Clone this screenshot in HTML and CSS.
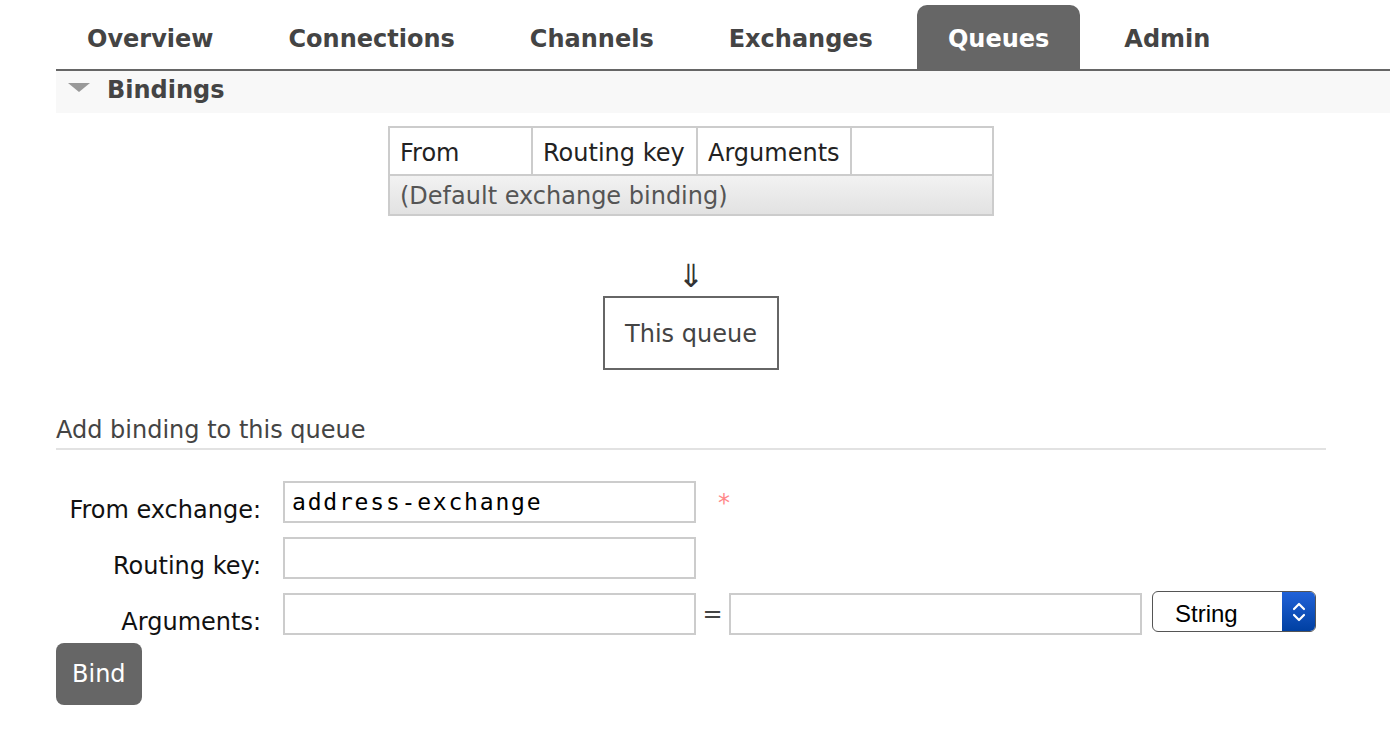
FILE: index.html
```html
<!DOCTYPE html>
<html lang="en">
<head>
<meta charset="utf-8">
<title>Queues - Bindings</title>
<link rel="stylesheet" href="styles.css">
</head>
<body>
<div class="page">
  <ul class="tabs">
    <li><a href="#">Overview</a></li>
    <li><a href="#">Connections</a></li>
    <li><a href="#">Channels</a></li>
    <li><a href="#">Exchanges</a></li>
    <li><a href="#" class="active">Queues</a></li>
    <li><a href="#">Admin</a></li>
  </ul>
  <div class="section-h"><span class="tri"></span><span>Bindings</span></div>
  <div class="content">
    <table class="bindings">
      <colgroup><col class="c1"><col class="c2"><col class="c3"><col class="c4"></colgroup>
      <thead>
        <tr><th>From</th><th>Routing key</th><th>Arguments</th><th></th></tr>
      </thead>
      <tbody>
        <tr><td colspan="4">(Default exchange binding)</td></tr>
      </tbody>
    </table>
    <div class="arrow">&#8659;</div>
    <div class="queue-box">This queue</div>

    <h3 class="add-h">Add binding to this queue</h3>

    <form class="bind-form" onsubmit="return false">
      <div class="form-row">
        <label class="lbl">From exchange:</label>
        <input class="inp" type="text" value="address-exchange">
        <span class="req">*</span>
      </div>
      <div class="form-row">
        <label class="lbl">Routing key:</label>
        <input class="inp" type="text" value="">
      </div>
      <div class="form-row last">
        <label class="lbl">Arguments:</label>
        <input class="inp" type="text" value="">
        <span class="eq">=</span>
        <input class="inp" type="text" value="">
        <div class="select">
          <span class="select-text">String</span>
          <span class="select-btn">
            <svg width="16" height="26" viewBox="0 0 16 26"><path d="M3 10 L8 5 L13 10 M3 16 L8 21 L13 16" fill="none" stroke="#fff" stroke-width="2.2" stroke-linecap="round" stroke-linejoin="round"/></svg>
          </span>
        </div>
      </div>
      <button class="btn" type="submit">Bind</button>
    </form>
  </div>
</div>
</body>
</html>
```
FILE: styles.css
```css
html, body {
  margin: 0;
  padding: 0;
  background: #fff;
}
body {
  font-family: "DejaVu Sans", Verdana, sans-serif;
  font-size: 24px;
  color: #444;
}
.page {
  padding-left: 56px;
}
.tabs {
  display: flex;
  gap: 13px;
  list-style: none;
  margin: 5px 0 0;
  padding: 0;
  border-bottom: 2px solid #666;
}
.tabs a {
  display: block;
  padding: 20px 31px 16px;
  line-height: 28px;
  font-weight: bold;
  color: #444;
  text-decoration: none;
}
.tabs a.active {
  background: #666;
  color: #fff;
  border-radius: 10px 10px 0 0;
}
.section-h {
  display: flex;
  align-items: flex-start;
  background: #f8f8f8;
  padding: 5px 0 9px 12px;
  line-height: 28px;
  font-weight: bold;
  color: #444;
}
.tri {
  width: 0;
  height: 0;
  border-left: 11px solid transparent;
  border-right: 11px solid transparent;
  border-top: 9px solid #999;
  margin: 7px 17px 0 0;
}
.content {
  width: 1270px;
}
.bindings {
  margin: 13px auto 0;
  border-collapse: collapse;
  table-layout: fixed;
  width: 604px;
  border: 2px solid #ccc;
}
.bindings .c1 { width: 143px; }
.bindings .c2 { width: 165px; }
.bindings .c3 { width: 154px; }
.bindings .c4 { width: 142px; }
.bindings th {
  border: 2px solid #ccc;
  font-weight: normal;
  text-align: left;
  color: #222;
  line-height: 28px;
  padding: 11px 10px 7px;
  white-space: nowrap;
}
.bindings td {
  border: 2px solid #ccc;
  line-height: 28px;
  padding: 6px 10px 4px;
  color: #555;
  background: linear-gradient(#f2f2f2, #e2e2e2);
}
.arrow {
  margin-top: 44px;
  text-align: center;
  font-size: 32px;
  line-height: 32px;
  color: #333;
}
.queue-box {
  width: max-content;
  margin: 4px auto 0;
  border: 2px solid #666;
  padding: 22px 20px 20px;
  line-height: 28px;
  color: #444;
}
.add-h {
  margin: 46px 0 0;
  font-size: 24px;
  font-weight: normal;
  line-height: 28px;
  color: #444;
  padding-bottom: 4px;
  border-bottom: 2px solid #e2e2e2;
}
.bind-form {
  margin-top: 31px;
}
.form-row {
  display: flex;
  align-items: flex-start;
  height: 42px;
  margin-bottom: 14px;
}
.form-row.last {
  margin-bottom: 0;
}
.lbl {
  box-sizing: border-box;
  width: 205px;
  height: 42px;
  text-align: right;
  padding-top: 15px;
  line-height: 28px;
  color: #111;
}
.inp {
  box-sizing: border-box;
  margin: 0 0 0 22px;
  width: 413px;
  height: 42px;
  border: 2px solid #ccc;
  padding: 0 7px;
  font-family: "DejaVu Sans Mono", monospace;
  font-size: 23px;
  letter-spacing: 1.8px;
  color: #000;
  background: #fff;
  outline: none;
}
.req {
  margin-left: 22px;
  padding-top: 8px;
  line-height: 28px;
  color: #f88;
}
.eq {
  width: 33px;
  text-align: center;
  line-height: 42px;
  color: #444;
}
.eq + .inp {
  margin-left: 0;
}
.select {
  box-sizing: border-box;
  display: flex;
  margin: -2px 0 0 10px;
  width: 164px;
  height: 41px;
  border: 1.5px solid #555;
  border-radius: 6px;
  overflow: hidden;
  background: #fff;
}
.select-text {
  flex: 1;
  padding: 4px 0 0 22px;
  font-family: "Liberation Sans", Arial, sans-serif;
  font-size: 24px;
  line-height: 36px;
  color: #000;
}
.select-btn {
  width: 33px;
  display: flex;
  align-items: center;
  justify-content: center;
  background: linear-gradient(#2162d8, #0040a2);
}
.btn {
  display: block;
  margin-top: 8px;
  padding: 17px 16px;
  border: none;
  border-radius: 8px;
  background: #666;
  color: #fff;
  font-family: "DejaVu Sans", Verdana, sans-serif;
  font-size: 24px;
  line-height: 28px;
}
```
